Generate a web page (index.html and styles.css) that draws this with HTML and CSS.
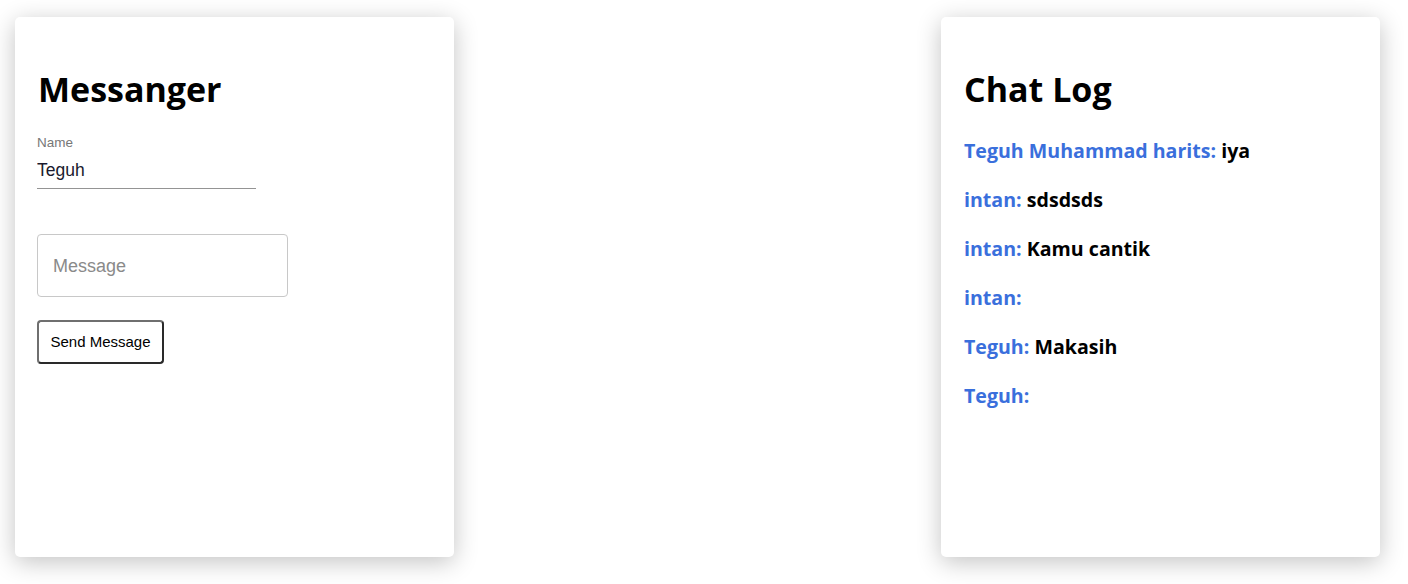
FILE: index.html
```html
<!DOCTYPE html>
<html lang="id">
<head>
<meta charset="utf-8">
<title>Messanger</title>
<link rel="stylesheet" href="styles.css">
</head>
<body>
<div class="page">
  <section class="card">
    <h1 class="title">Messanger</h1>
    <div class="field">
      <label class="field-label" for="name">Name</label>
      <input class="field-input" id="name" type="text" value="Teguh">
    </div>
    <textarea class="message" placeholder="Message"></textarea>
    <button class="send" type="button">Send Message</button>
  </section>
  <section class="card">
    <h1 class="title">Chat Log</h1>
    <p class="entry"><span class="who">Teguh Muhammad harits:</span> iya</p>
    <p class="entry"><span class="who">intan:</span> sdsdsds</p>
    <p class="entry"><span class="who">intan:</span> Kamu cantik</p>
    <p class="entry"><span class="who">intan:</span> </p>
    <p class="entry"><span class="who">Teguh:</span> Makasih</p>
    <p class="entry"><span class="who">Teguh:</span> </p>
  </section>
</div>
</body>
</html>
```

FILE: styles.css
```css
html, body {
  margin: 0;
  padding: 0;
  background: #ffffff;
}

.page {
  display: flex;
  justify-content: space-between;
  padding: 17px 28px 27px 15px;
}

.card {
  width: 439px;
  height: 540px;
  box-sizing: border-box;
  padding: 0 22px;
  background: #ffffff;
  border-radius: 5px;
  box-shadow: 0 5px 24px rgba(0, 0, 0, 0.24);
  font-family: "Open Sans", "Noto Sans", sans-serif;
}

.title {
  margin: 49px 0 0;
  padding-left: 1px;
  font-size: 34px;
  line-height: 46px;
  font-weight: 700;
  color: #000;
}

.field {
  display: flex;
  flex-direction: column;
  width: 219px;
  margin-top: 23px;
  font-family: "Liberation Sans", Arial, sans-serif;
}

.field-label {
  font-size: 13.5px;
  line-height: 16px;
  color: #777;
}

.field-input {
  border: none;
  border-bottom: 1px solid #949494;
  padding: 9px 0 8px;
  margin: 0;
  font-family: "Liberation Sans", Arial, sans-serif;
  font-size: 17.5px;
  line-height: 20px;
  color: #1a1a2e;
  outline: none;
  background: transparent;
}

.message {
  display: block;
  width: 251px;
  height: 63px;
  box-sizing: border-box;
  margin-top: 45px;
  padding: 21px 15px;
  border: 1px solid #c8c8c8;
  border-radius: 4px;
  resize: none;
  font-family: "Liberation Sans", Arial, sans-serif;
  font-size: 18px;
  line-height: 21px;
  color: #222;
  overflow: hidden;
}

.message::placeholder {
  color: #8a8a8a;
}

.send {
  display: block;
  margin-top: 23px;
  width: 127px;
  height: 44px;
  box-sizing: border-box;
  border: 2px solid #2a2a2a;
  border-color: #6f6f6f #2a2a2a #2a2a2a #6f6f6f;
  border-radius: 4px;
  background: #fff;
  padding: 0 0 2px;
  font-family: "Liberation Sans", Arial, sans-serif;
  font-size: 15px;
  color: #000;
}

.entry {
  margin: 0 0 20px;
  padding-left: 1px;
  font-size: 19.6px;
  line-height: 29px;
  font-weight: 700;
  color: #000;
}

.title + .entry {
  margin-top: 24px;
}

.who {
  color: #3a6fdc;
}
```
